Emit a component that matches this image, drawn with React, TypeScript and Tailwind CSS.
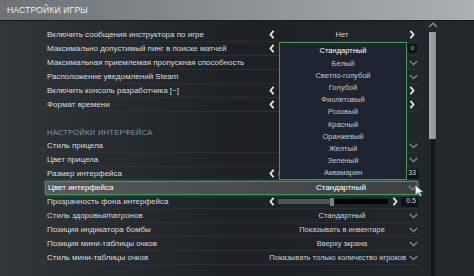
import React from "react";

type Kind = "arrows" | "box" | "drop" | "slider" | "none";

type Row = {
  label: string;
  kind: Kind;
  value?: string;
  box?: string;
  pos?: number;
  active?: boolean;
};

// values that sit under the open dropdown are left out
const GAME_ROWS: Row[] = [
  { label: "Включить сообщения инструктора по игре", kind: "arrows", value: "Нет" },
  { label: "Максимально допустимый пинг в поиске матчей", kind: "box", box: "0" },
  { label: "Максимальная приемлемая пропускная способность", kind: "drop" },
  { label: "Расположение уведомлений Steam", kind: "drop" },
  { label: "Включить консоль разработчика [~]", kind: "arrows" },
  { label: "Формат времени", kind: "arrows" },
];

const HUD_ROWS: Row[] = [
  { label: "Стиль прицела", kind: "drop" },
  { label: "Цвет прицела", kind: "drop" },
  { label: "Размер интерфейса", kind: "slider", box: "33", pos: 60 },
  { label: "Цвет интерфейса", kind: "drop", value: "Стандартный", active: true },
  { label: "Прозрачность фона интерфейса", kind: "slider", box: "0.5", pos: 47 },
  { label: "Стиль здоровья/патронов", kind: "drop", value: "Стандартный" },
  { label: "Позиция индикатора бомбы", kind: "drop", value: "Показывать в инвентаре" },
  { label: "Позиция мини-таблицы очков", kind: "drop", value: "Вверху экрана" },
  { label: "Стиль мини-таблицы очков", kind: "drop", value: "Показывать только количество игроков" },
];

const COLORS = [
  "Стандартный",
  "Белый",
  "Светло-голубой",
  "Голубой",
  "Фиолетовый",
  "Розовый",
  "Красный",
  "Оранжевый",
  "Желтый",
  "Зеленый",
  "Аквамарин",
];

function ArrowLeft() {
  return (
    <svg width="6" height="9" viewBox="0 0 6 9" className="shrink-0">
      <path d="M4.6 0.8 L1.4 4.5 L4.6 8.2" fill="none" stroke="#e2e4e6" strokeWidth="1.9" strokeLinejoin="round" />
    </svg>
  );
}

function ArrowRight() {
  return (
    <svg width="6" height="9" viewBox="0 0 6 9" className="shrink-0">
      <path d="M1.4 0.8 L4.6 4.5 L1.4 8.2" fill="none" stroke="#e2e4e6" strokeWidth="1.9" strokeLinejoin="round" />
    </svg>
  );
}

function Chevron() {
  return (
    <svg width="9" height="6" viewBox="0 0 9 6" className="shrink-0">
      <path d="M0.8 1 L4.5 4.6 L8.2 1" fill="none" stroke="#868b90" strokeWidth="1.3" />
    </svg>
  );
}

function Control({ row }: { row: Row }) {
  const text = row.active ? "text-[8px] text-white" : "text-[7.5px] text-[#cfd2d4]";
  if (row.kind === "slider") {
    return (
      <div className="flex h-full w-[152px] items-center">
        <div className="flex w-[12px] justify-end pr-[3px]">
          <ArrowLeft />
        </div>
        <div className="relative flex h-[5px] w-[110px] items-center bg-black">
          <div className="h-full bg-[#4e5357]" style={{ width: `${row.pos}%` }} />
          <div className="h-[8px] w-[4px] bg-[#7c8185]" />
        </div>
        <div className="flex w-[13px] justify-center">
          <ArrowRight />
        </div>
        <div className="flex h-[10px] w-[17px] items-center justify-end bg-[#101316] pr-[2px] text-[7px] text-[#d5d8da]">
          {row.box}
        </div>
      </div>
    );
  }
  return (
    <div className="flex h-full w-[152px] items-center">
      <div className="flex w-[12px] justify-end pr-[3px]">
        {(row.kind === "arrows" || row.kind === "box") && <ArrowLeft />}
      </div>
      <div className={`flex flex-1 justify-center whitespace-nowrap ${text}`}>{row.value}</div>
      <div className="flex w-[12px] items-center pl-[3px]">
        {row.kind === "arrows" && <ArrowRight />}
        {row.kind === "drop" && <Chevron />}
        {row.kind === "box" && (
          <div className="-ml-[12px] flex h-[9px] w-[20px] items-center justify-end bg-[#101316] pr-[3px] text-[6px] text-[#bfc2c4]">
            {row.box}
          </div>
        )}
      </div>
    </div>
  );
}

function SettingRow({ row }: { row: Row }) {
  return (
    <div
      className={`flex h-[14px] items-center ${
        row.active
          ? "border border-[#3b9a55] bg-gradient-to-r from-[#55595c] to-[#3d4144] shadow-[0_0_3px_#2f8a4a]"
          : "border-b border-[#2c3034]"
      }`}
    >
      <div className={`flex-1 whitespace-nowrap pl-[2px] text-[8px] ${row.active ? "text-white" : "text-[#dadcde]"}`}>
        {row.label}
      </div>
      <Control row={row} />
    </div>
  );
}

export default function App() {
  return (
    <div className="relative h-[276px] w-[474px] overflow-hidden bg-gradient-to-r from-[#30363a] via-[#1d2125] to-[#23282c] font-['Liberation_Sans',Arial,sans-serif]">
      <div className="flex h-[21px] items-center border-b border-[#15181a] bg-gradient-to-r from-[#6c7276] via-[#8c9195] to-[#aab0b3] px-[7px] text-[8.5px] tracking-[0.2px] text-[#eef1f3]">
        НАСТРОЙКИ ИГРЫ
      </div>

      <div className="flex">
        <div className="w-[45px]" />
        <div className="w-[373px] pt-[7px]">
          {GAME_ROWS.map((r) => (
            <SettingRow key={r.label} row={r} />
          ))}
          <div className="flex h-[27px] items-end pb-[1px] pl-[2px] text-[7.5px] tracking-[0.3px] text-[#8497aa]">
            НАСТРОЙКИ ИНТЕРФЕЙСА
          </div>
          {HUD_ROWS.map((r) => (
            <SettingRow key={r.label} row={r} />
          ))}
        </div>
        <div className="ml-[10px] flex w-[9px] flex-col items-center pt-[1px]">
          <svg width="10" height="6" viewBox="0 0 10 6">
            <path d="M1 5 L5 1.2 L9 5" fill="none" stroke="#8e9396" strokeWidth="1.4" />
          </svg>
          <div className="mt-[4px] h-[107px] w-[7px] bg-gradient-to-r from-[#a7a9ab] to-[#8d9092]" />
          <div className="h-[140px] w-[4px] bg-[#14171a]" />
        </div>
      </div>

      {/* colour dropdown */}
      <div className="absolute left-[279px] top-[42px] w-[128px] border-[1.5px] border-[#3a9c55] bg-[#1e2530] pt-[2px] text-center">
        {COLORS.map((c, i) => (
          <div
            key={c}
            className={`flex h-[12.2px] items-center justify-center text-[7.5px] ${
              i === 0 ? "text-white" : "text-[#c3c7cb]"
            }`}
          >
            {c}
          </div>
        ))}
      </div>

      {/* mouse pointer */}
      <svg className="absolute left-[415px] top-[185px]" width="9" height="12" viewBox="0 0 9 12">
        <path d="M0.5 0.5 L0.5 10 L3 7.6 L5 11.3 L6.5 10.6 L4.6 7 L8 7 Z" fill="#f2f4f2" stroke="#3a9c55" strokeWidth="0.6" />
      </svg>
    </div>
  );
}
